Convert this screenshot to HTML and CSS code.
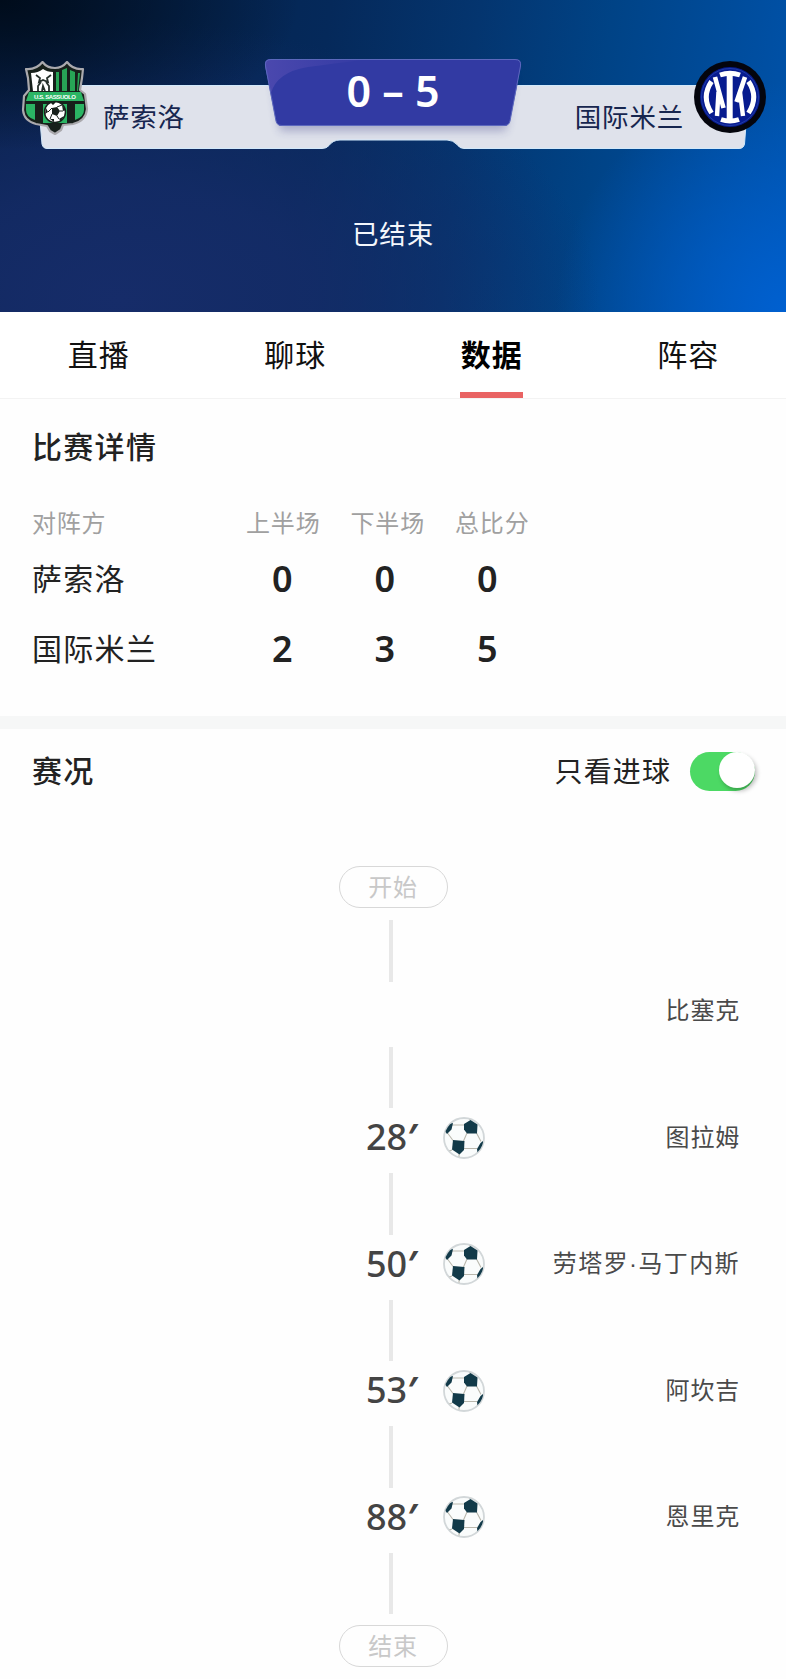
FILE: index.html
```
<!DOCTYPE html>
<html lang="zh-CN">
<head>
  <meta charset="UTF-8">
  <meta name="viewport" content="width=device-width, initial-scale=1.0">
  <title>萨索洛 0 - 5 国际米兰</title>
  <link rel="stylesheet" href="styles.css">
</head>
<body>
  <!-- shared ball icon -->
  <svg class="defs" width="0" height="0">
    <symbol id="ball" viewBox="0 0 42 42">
      <clipPath id="ballClip"><circle cx="21" cy="21" r="19.6"/></clipPath>
      <circle cx="21" cy="21" r="20" fill="#fafcfc" stroke="#d2d7d9" stroke-width="1.8"/>
      <g clip-path="url(#ballClip)">
        <path d="M9 8H21M24 16L20.500 24M4.500 16L10 23.500M33.500 16L38 24.500M21 31.500H34M16 37V42M27 3V0M9 33L4 35" fill="none" stroke="#b9b7ad" stroke-width="1.100"/>
        <path d="M21 7L27.500 3L34.500 7.500L34 16.500H24L21 12.500Z" fill="#123a49"/>
        <path d="M10 23L21.500 24L21 33L16.500 37.500L9 32.500Z" fill="#123a49"/>
        <path d="M1 13L5 7L10 6L8.500 12.500L4 17Z" fill="#123a49"/>
        <path d="M40 24L37.500 26L34 32L34.500 36L40 31Z" fill="#123a49"/>
      </g>
    </symbol>
  </svg>

  <header class="match-header">
    <div class="scoreboard">
      <svg class="board-bg" viewBox="0 0 786 100">
        <defs>
          <linearGradient id="shine" x1="0" y1="0" x2="1" y2="0">
            <stop offset="0" stop-color="#4b48ae"/>
            <stop offset="1" stop-color="#323aa3"/>
          </linearGradient>
          <filter id="soft" x="-20%" y="-20%" width="140%" height="160%">
            <feGaussianBlur stdDeviation="5"/>
          </filter>
        </defs>
        <path d="M37 26.500H749L744.500 85Q743.500 89.500 739 89.500H464Q459.500 89.500 457 85.500Q453 81 447 81H340Q333 81 329 86.500Q326.500 89.500 322 89.500H47Q43 89.500 42 85Z" fill="#dfe2eb" stroke="#d2e9fb"/>
        <path d="M272 14H514L506 72H280Z" fill="#262c7a" opacity=".3" filter="url(#soft)"/>
        <path d="M271 0H515Q522 0 521 7L510 62Q509 67 504 67H282Q277 67 276 62L265 7Q264 0 271 0Z" fill="#323aa3"/>
        <path d="M271 0H370Q330 5 308 8Q277 13 271 34L265 7Q264 0 271 0Z" fill="url(#shine)"/>
        <path d="M271 .5H515Q521.500 .5 520.500 7L510 62Q509 66.500 504 66.500H282Q277 66.500 276 62L265.500 7Q264.500 .5 271 .5Z" fill="none" stroke="#5c68bd"/>
      </svg>

      <div class="team home">
        <svg class="crest" width="68" height="74" viewBox="0 0 68 74">
          <path d="M5 8Q15 9 21.500 1Q26 7 34 7Q41 7 46 1Q52 9 62 8L61 17L59 29L64 33L66 48Q65 60 52 63L42 64L40 69L34 73L29 70L26 65L15 63Q3 60 2 49L3 35L8 29L7 17Z" fill="#17201b" stroke="#aaa9ad" stroke-width="2.200" stroke-linejoin="round"/>
          <path d="M10 12Q17 12 22 8Q26 11 32 11V30H12Z" fill="#fff"/>
          <path d="M35 11H38V30H35ZM41 9L46 7V30H41ZM49 9L54 11V30H49ZM57 12H59L57 30H56Z" fill="#27a556"/>
          <path d="M15 14L19 17L18 21L22 19L27 21L26 17L30 14M17 30V25L20 21M21 30L22 25L24 30M28 30V25L25 21" stroke="#26302b" stroke-width="1.800" fill="none"/>
          <path d="M8 31H60L63 40H5Z" fill="#2bb564"/>
          <text x="34" y="38" text-anchor="middle" class="crest-text" textLength="42">U.S. SASSUOLO</text>
          <path d="M5 43H14V59Q5 56 5 49ZM22 43H46V62H22ZM54 43H63V49Q63 56 54 59Z" fill="#2bb564"/>
          <circle cx="34" cy="51" r="10.500" fill="#fff" stroke="#17201b" stroke-width="1.500"/>
          <path d="M31 47L36 46L39 50L36 55L31 53ZM29 41L35 41L32 44ZM41 44L45 49L42 50ZM25 47L27 51L24 53ZM29 58L33 58L33 61ZM38 58L43 55L40 60Z" fill="#17201b"/>
          <path d="M31 53L29 58M36 55L38 58M39 50L42 50M36 46L41 44M31 47L27 51" stroke="#17201b"/>
        </svg>
        <span class="team-name">萨索洛</span>
      </div>

      <div class="score">0 – 5</div>

      <div class="team away">
        <span class="team-name">国际米兰</span>
        <svg class="crest" width="72" height="74" viewBox="0 0 72 74">
          <circle cx="36" cy="37" r="36" fill="#04050d"/>
          <circle cx="36" cy="37" r="30" fill="#071b8f"/>
          <circle cx="36" cy="37" r="28.500" fill="none" stroke="#2b4bb1" stroke-width=".7"/>
          <g fill="none" stroke="#fff">
            <path d="M26 15Q36 11.500 46 15M27 59.500Q36 62.500 45 59.500" stroke-width="5"/>
            <path d="M35.700 14V60" stroke-width="6"/>
            <path d="M17.500 21.500Q7 37 17.500 53M54.500 21.500Q65 37 54.500 53" stroke-width="5"/>
            <path d="M21 17L29.500 48M51 17L42.500 42" stroke-width="4.600"/>
            <path d="M24.500 32L23 56M46 32L49 56" stroke-width="4.400"/>
          </g>
        </svg>
      </div>
    </div>
    <div class="match-status">已结束</div>
  </header>

  <nav class="tabs">
    <a class="tab">直播</a>
    <a class="tab">聊球</a>
    <a class="tab active">数据</a>
    <a class="tab">阵容</a>
  </nav>

  <section class="details">
    <h2>比赛详情</h2>
    <div class="row head">
      <span>对阵方</span><span>上半场</span><span>下半场</span><span>总比分</span>
    </div>
    <div class="row">
      <span>萨索洛</span><b>0</b><b>0</b><b>0</b>
    </div>
    <div class="row">
      <span>国际米兰</span><b>2</b><b>3</b><b>5</b>
    </div>
  </section>

  <section class="events">
    <div class="events-head">
      <h2>赛况</h2>
      <div class="filter">
        <span>只看进球</span>
        <div class="switch"><i class="knob"></i></div>
      </div>
    </div>

    <div class="timeline">
      <div class="pill">开始</div>
      <div class="line first"></div>
      <div class="event">
        <span class="player">比塞克</span>
      </div>
      <div class="line"></div>
      <div class="event">
        <span class="time">28<i>′</i></span>
        <svg class="ball"><use href="#ball"/></svg>
        <span class="player">图拉姆</span>
      </div>
      <div class="line"></div>
      <div class="event">
        <span class="time">50<i>′</i></span>
        <svg class="ball"><use href="#ball"/></svg>
        <span class="player latin-dot">劳塔罗·马丁内斯</span>
      </div>
      <div class="line"></div>
      <div class="event">
        <span class="time">53<i>′</i></span>
        <svg class="ball"><use href="#ball"/></svg>
        <span class="player">阿坎吉</span>
      </div>
      <div class="line"></div>
      <div class="event">
        <span class="time">88<i>′</i></span>
        <svg class="ball"><use href="#ball"/></svg>
        <span class="player">恩里克</span>
      </div>
      <div class="line last"></div>
      <div class="pill">结束</div>
    </div>
  </section>
</body>
</html>
```
FILE: styles.css
```
* {
  box-sizing: border-box;
}

body {
  margin: 0;
  min-height: 1679px;
  background-color: #fefefe;
  color: #222;
  font-family: "Noto Sans CJK SC", sans-serif;
}

.defs {
  position: absolute;
}

h2 {
  margin: 0;
  font-size: 30px;
  line-height: 44px;
  font-weight: 500;
  letter-spacing: 1.3px;
}

/* Header */
.match-header {
  height: 312px;
  padding-top: 59px;
  background:
    radial-gradient(ellipse 300px 150px at 0 0, #000c1b 0%, rgba(0, 12, 27, 0) 100%),
    radial-gradient(ellipse 480px 280px at 120px 300px, #162c69 0%, rgba(22, 44, 105, 0.8) 40%, rgba(22, 44, 105, 0) 100%),
    radial-gradient(ellipse 230px 230px at 100% 100%, #0060d0 0%, rgba(0, 96, 208, 0) 100%),
    linear-gradient(98deg, #051f45 0%, #05295a 40%, #04356f 58%, #004386 74%, #0053ac 100%);
}

.scoreboard {
  position: relative;
  display: flex;
  justify-content: space-between;
  height: 100px;
}

.board-bg {
  position: absolute;
  left: 0;
  top: 0;
  width: 786px;
  height: 100px;
}

.team {
  position: relative;
  display: flex;
  align-items: flex-start;
  width: 265px;
}

.home {
  padding-left: 21px;
}

.away {
  justify-content: flex-end;
  padding-right: 20px;
}

.crest {
  flex: none;
  margin-top: 1px;
}

.home .crest {
  margin-top: 2px;
}

.crest-text {
  font: bold 6px "Liberation Sans", sans-serif;
  fill: #fff;
}

.team-name {
  margin-top: 37px;
  font-size: 26.500px;
  line-height: 40px;
  letter-spacing: 0.8px;
  color: #17264f;
}

.home .team-name {
  margin-left: 14px;
}

.away .team-name {
  margin-right: 10px;
}

.score {
  position: relative;
  font-family: "Noto Sans", sans-serif;
  font-size: 43px;
  font-weight: 600;
  line-height: 64px;
  color: #fff;
}

.match-status {
  margin-top: 54px;
  font-size: 26.500px;
  line-height: 40px;
  letter-spacing: 0.8px;
  text-align: center;
  color: #f4f7fc;
}

/* Tabs */
.tabs {
  display: flex;
  height: 87px;
  border-bottom: 1px solid #f3f3f3;
  background-color: #fff;
}

.tab {
  flex: 1;
  display: flex;
  flex-direction: column;
  align-items: center;
  padding: 19px 0 0 1px;
  font-size: 30px;
  line-height: 44px;
  letter-spacing: 1px;
  color: #111;
}

.tab.active {
  font-weight: 700;
  color: #000;
}

.tab.active::after {
  content: "";
  width: 63px;
  height: 6px;
  margin-top: 17px;
  background-color: #e96363;
}

/* Half-time table */
.details {
  height: 330px;
  padding: 24px 32px 0;
  border-bottom: 13px solid #f6f7f7;
}

.row {
  display: grid;
  grid-template-columns: 199px 102.500px 102.500px 102.500px;
  align-items: center;
  height: 70px;
  font-size: 30px;
  letter-spacing: 1.3px;
}

.row > :not(:first-child) {
  text-align: center;
}

.row b {
  padding-top: 2px;
  font-family: "Noto Sans", sans-serif;
  font-size: 36px;
  font-weight: 600;
  letter-spacing: 0;
}

.row.head {
  grid-template-columns: 199px 104.500px 104.500px 104.500px;
  height: 36px;
  margin: 36px 0 3px;
  font-size: 24px;
  letter-spacing: 0.8px;
  color: #a0a0a0;
}

/* Events */
.events-head {
  display: flex;
  justify-content: space-between;
  align-items: center;
  height: 84px;
  padding: 0 31px 0 32px;
}

.events-head h2 {
  margin-bottom: 5px;
}

.filter {
  display: flex;
  align-items: center;
  gap: 19px;
  font-size: 28px;
  letter-spacing: 1.1px;
}

.filter span {
  margin-bottom: 3px;
}

.switch {
  display: flex;
  justify-content: flex-end;
  width: 65px;
  height: 39px;
  border-radius: 20px;
  background-color: #4cd964;
}

.knob {
  width: 36px;
  height: 36px;
  border-radius: 50%;
  background-color: #fff;
  box-shadow: 2px 3px 4px rgba(0, 0, 0, 0.25);
}

.timeline {
  padding-top: 53px;
}

.pill {
  width: 109px;
  height: 42px;
  margin: 0 auto;
  border: 1px solid #d8d8d8;
  border-radius: 21px;
  font-size: 24px;
  line-height: 38px;
  letter-spacing: 0.7px;
  text-align: center;
  color: #c8c8c8;
}

.line {
  width: 4px;
  height: 61.500px;
  margin-left: 389px;
  background-color: #e8e8e8;
}

.line.first {
  margin-top: 12px;
}

.line.last {
  margin-bottom: 11px;
}

.event {
  display: flex;
  align-items: center;
  height: 65px;
  padding: 0 46px 8px 366px;
}

.time {
  width: 77px;
  font-family: "Noto Sans", sans-serif;
  font-size: 36px;
  font-weight: 500;
  color: #444;
}

.time i {
  font-style: normal;
  font-weight: 700;
}

.ball {
  width: 42px;
  height: 42px;
  margin-top: 2px;
}

.player {
  margin: 0 0 2px auto;
  font-size: 24px;
  line-height: 36px;
  letter-spacing: 0.8px;
  color: #4a4a4a;
}

/* narrow middle dot between given name and surname */
.latin-dot {
  margin-bottom: -2px;
  font-family: "Liberation Sans", "Noto Sans CJK SC", sans-serif;
  letter-spacing: 1.4px;
}
```
